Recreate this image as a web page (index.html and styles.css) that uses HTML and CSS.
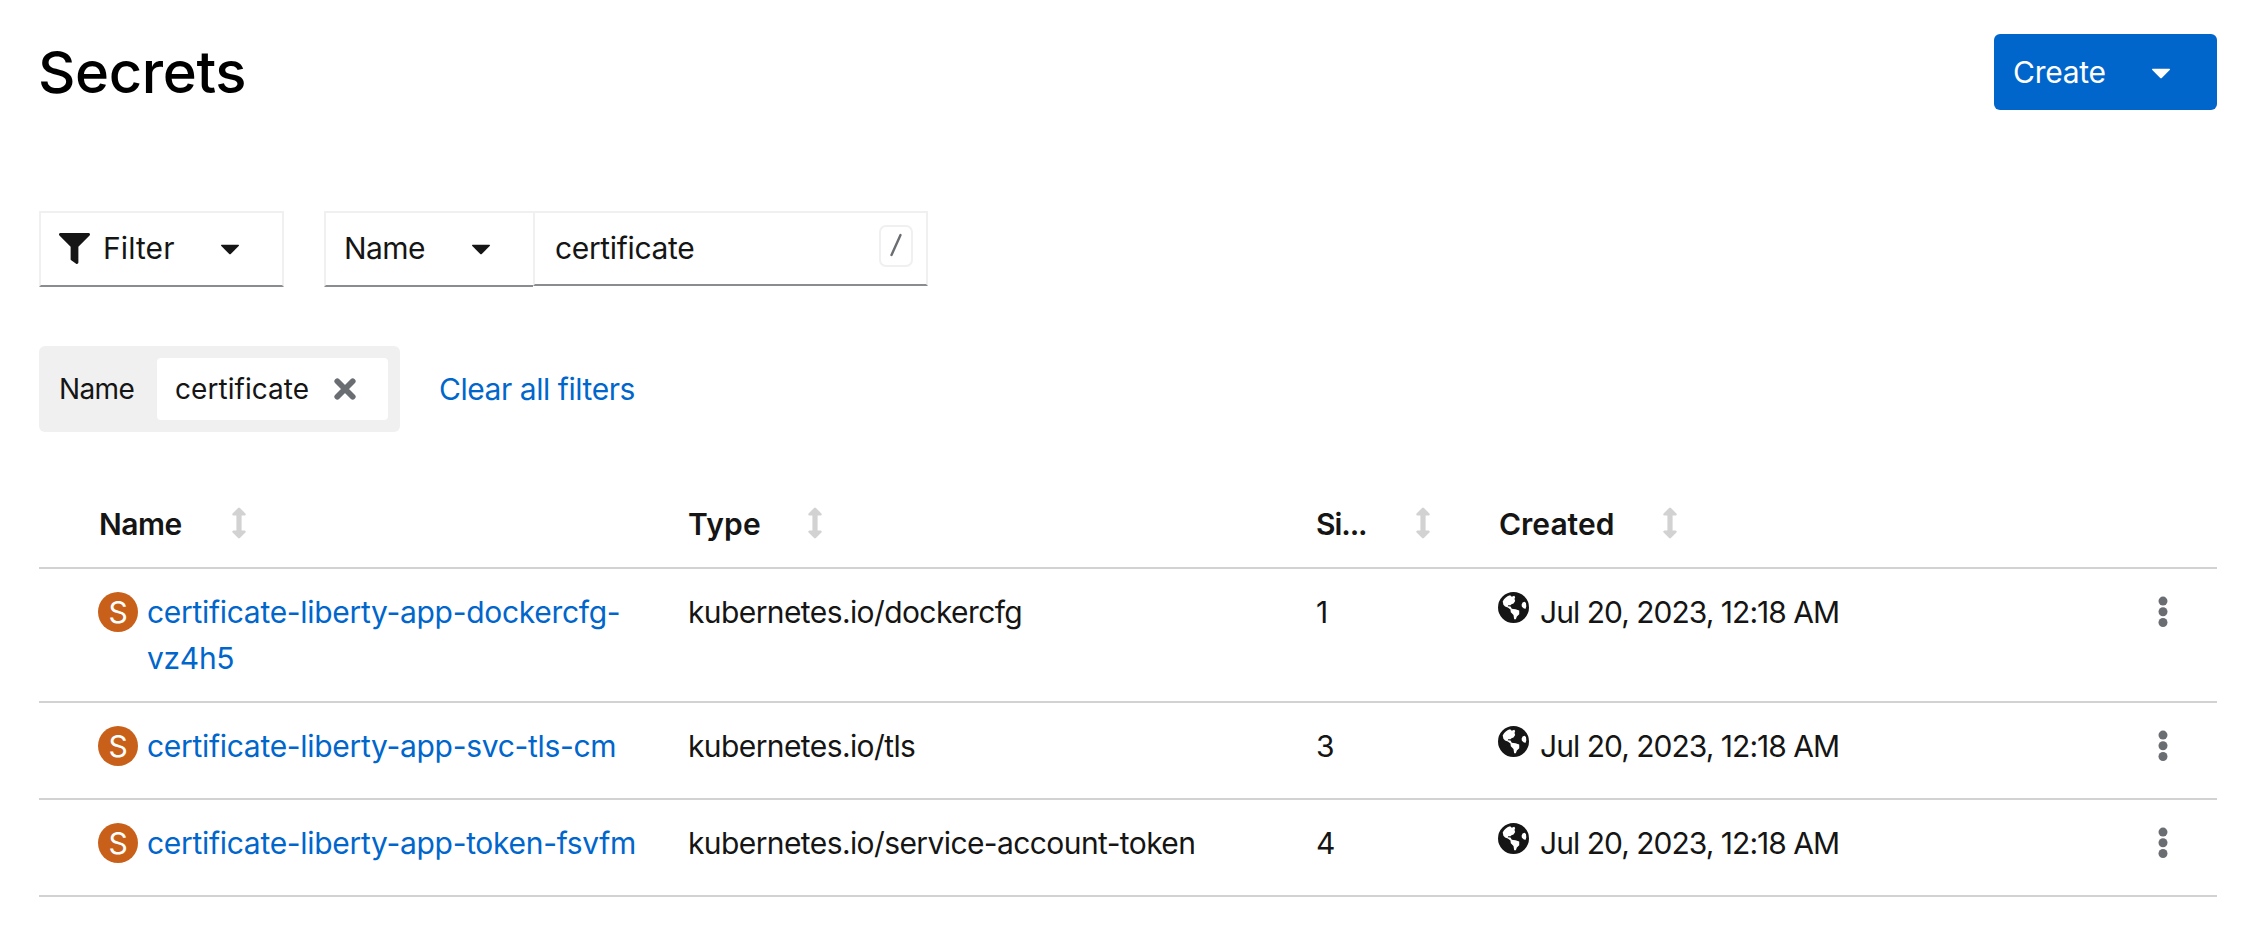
FILE: index.html
```html
<!DOCTYPE html>
<html lang="en">
<head>
<meta charset="utf-8">
<title>Secrets</title>
<link rel="stylesheet" href="styles.css">
</head>
<body>
<svg class="defs" aria-hidden="true">
  <symbol id="caret" viewBox="0 0 20 12"><path d="M1.8 .8H18.2Q19.8 .8 18.7 2L11 9.8Q10 10.8 9 9.8L1.3 2Q.2 .8 1.8 .8Z"/></symbol>
  <symbol id="filter" viewBox="0 0 512 512"><path d="M487.976 0H24.028C2.71 0-8.047 25.866 7.058 40.971L192 225.941V432c0 7.831 3.821 15.17 10.237 19.662l80 55.98C298.02 518.69 320 507.493 320 487.98V225.941l184.947-184.97C520.021 25.896 509.338 0 487.976 0z"/></symbol>
  <symbol id="sort" viewBox="0 0 14 32"><path d="M6.1 .9Q7 .1 7.9 .9L13.4 6.4Q14.4 8 12.6 8.4H9.6V23.6H12.6Q14.4 24 13.4 25.6L7.9 31.1Q7 31.9 6.1 31.1L.6 25.6Q-.4 24 1.4 23.6H4.4V8.4H1.4Q-.4 8 .6 6.4Z"/></symbol>
  <symbol id="globe" viewBox="0 0 92 92"><path fill-rule="evenodd" d="M46 0a46 46 0 1 0 0 92a46 46 0 1 0 0-92ZM14 28C18 19 27 12 36 10L41 14L48 11L51 15L49 21L51 27L46 34L40 36L37 39H30L29 42L37 43L41 50L52 51L63 55L63 66L56 73L53 81H48L46 68L38 60L37 52L29 46L21 43L16 38ZM79 29L83 33L84 42L82 50L77 49L71 44L70 38L73 31Z"/></symbol>
  <symbol id="kebab" viewBox="0 0 10 32"><circle cx="5" cy="5.1" r="4.5"/><circle cx="5" cy="15.8" r="4.5"/><circle cx="5" cy="26.5" r="4.5"/></symbol>
</svg>

<main class="page">
  <header class="page-header">
    <h1 class="title">Secrets</h1>
    <button class="create"><span class="create-label">Create</span><svg class="caret"><use href="#caret"/></svg></button>
  </header>

  <div class="toolbar">
    <button class="toggle toggle-filter"><svg class="filter-icon"><use href="#filter"/></svg><span class="filter-label">Filter</span><svg class="caret"><use href="#caret"/></svg></button>
    <div class="search">
      <button class="toggle toggle-name"><span class="name-label">Name</span><svg class="caret"><use href="#caret"/></svg></button>
      <div class="search-field"><span class="search-text">certificate</span><kbd class="shortcut"><svg viewBox="0 0 12 24"><path d="M1.5 22L10.5 2"/></svg></kbd></div>
    </div>
  </div>

  <div class="chips">
    <div class="chip-group">
      <span class="chip-category">Name</span>
      <div class="chip"><span class="chip-text">certificate</span><svg class="close" viewBox="0 0 22 22"><path d="M3.3 3.3L18.7 18.7M18.7 3.3L3.3 18.7"/></svg></div>
    </div>
    <a class="clear">Clear all filters</a>
  </div>

  <section class="table">
    <div class="row head">
      <div class="cell"><span class="th-name">Name</span><svg class="sort"><use href="#sort"/></svg></div>
      <div class="cell"><span class="th-type">Type</span><svg class="sort"><use href="#sort"/></svg></div>
      <div class="cell"><span class="th-size">Si...</span><svg class="sort"><use href="#sort"/></svg></div>
      <div class="cell"><span class="th-created">Created</span><svg class="sort"><use href="#sort"/></svg></div>
    </div>
    <div class="row">
      <div class="cell"><span class="badge">S</span><a class="link">certificate-liberty-app-dockercfg-<br>vz4h5</a></div>
      <div class="cell kind">kubernetes.io/dockercfg</div>
      <div class="cell">1</div>
      <div class="cell"><svg class="globe"><use href="#globe"/></svg><span class="date">Jul 20, 2023, 12:18 AM</span></div>
      <div class="cell"><svg class="kebab"><use href="#kebab"/></svg></div>
    </div>
    <div class="row">
      <div class="cell"><span class="badge">S</span><a class="link">certificate-liberty-app-svc-tls-cm</a></div>
      <div class="cell kind">kubernetes.io/tls</div>
      <div class="cell">3</div>
      <div class="cell"><svg class="globe"><use href="#globe"/></svg><span class="date">Jul 20, 2023, 12:18 AM</span></div>
      <div class="cell"><svg class="kebab"><use href="#kebab"/></svg></div>
    </div>
    <div class="row">
      <div class="cell"><span class="badge">S</span><a class="link">certificate-liberty-app-token-fsvfm</a></div>
      <div class="cell kind">kubernetes.io/service-account-token</div>
      <div class="cell">4</div>
      <div class="cell"><svg class="globe"><use href="#globe"/></svg><span class="date">Jul 20, 2023, 12:18 AM</span></div>
      <div class="cell"><svg class="kebab"><use href="#kebab"/></svg></div>
    </div>
  </section>
</main>
</body>
</html>
```
FILE: styles.css
```css
* { box-sizing: border-box; }

body {
  margin: 0;
  background: #fff;
  color: #151515;
  font: 400 30px/46px Inter, "Liberation Sans", sans-serif;
}

button {
  margin: 0;
  font: inherit;
  color: inherit;
  text-align: left;
}

svg { display: block; flex: none; fill: currentColor; }
.defs { position: absolute; width: 0; height: 0; }
.page { padding: 34px 43px 0 39px; }

.page-header { display: flex; justify-content: space-between; height: 76px; }
.title {
  margin: 0 0 0 -1px;
  color: #000;
  font-size: 58px;
  font-weight: 540;
  line-height: 76px;
  letter-spacing: -.4px;
}
.create {
  display: flex;
  align-items: center;
  width: 223px;
  padding: 0 0 0 19px;
  border: 0;
  border-radius: 6px;
  background: #06c;
  color: #fff;
}
.create-label { width: 138px; letter-spacing: -.25px; }
.caret { width: 20px; height: 12px; margin-top: 3px; }

.toolbar { display: flex; align-items: flex-start; gap: 40px; margin-top: 101px; }
.toggle {
  display: flex;
  align-items: center;
  height: 76px;
  border: 2px solid #f0f0f0;
  border-bottom-color: #8a8d90;
  background: #fff;
  padding: 0 0 2px;
}
.toggle-filter { width: 245px; padding-left: 18px; }
.filter-icon { width: 31px; height: 31px; }
.filter-label { width: 117px; margin-left: 13px; letter-spacing: .1px; }
.search { display: flex; align-items: flex-start; }
.toggle-name { width: 209px; border-right: 0; padding-left: 18px; }
.name-label { width: 127px; letter-spacing: -.6px; }
.search-field {
  display: flex;
  justify-content: space-between;
  width: 395px;
  height: 75px;
  padding: 12px 13px 0 20px;
  border: 2px solid #f0f0f0;
  border-bottom-color: #8a8d90;
}
.search-text { letter-spacing: -.35px; }
.shortcut {
  display: flex;
  align-items: center;
  justify-content: center;
  width: 34px;
  height: 42px;
  border: 2px solid #f0f0f0;
  border-radius: 7px;
}
.shortcut svg { width: 12px; height: 24px; margin-top: -2px; fill: none; stroke: #6a6e73; stroke-width: 2.4; stroke-linecap: round; }

.chips { display: flex; align-items: center; gap: 39px; margin-top: 59px; }
.chip-group {
  display: flex;
  align-items: center;
  width: 361px;
  height: 86px;
  padding-left: 20px;
  border-radius: 6px;
  background: #f0f0f0;
}
.chip-category { width: 98px; font-size: 28px; letter-spacing: -.6px; }
.chip {
  display: flex;
  align-items: center;
  width: 231px;
  height: 62px;
  padding-left: 18px;
  border-radius: 4px;
  background: #fff;
}
.chip-text { width: 159px; font-size: 28px; letter-spacing: .05px; }
.close { width: 22px; height: 22px; fill: none; stroke: #6a6e73; stroke-width: 5.8; stroke-linecap: round; }
.clear { color: #06c; letter-spacing: -.45px; }

.table { margin-top: 49px; }
.row {
  display: grid;
  grid-template-columns: 590px 628px 182px 619px 1fr;
  min-height: 97px;
  padding: 20px 0 20px 59px;
  border-bottom: 2px solid #d2d2d2;
}
.head { min-height: 88px; font-weight: 600; }
.cell { display: flex; align-items: flex-start; white-space: nowrap; }
.th-name { width: 134px; padding-left: 1px; letter-spacing: -.5px; }
.th-type { width: 120px; letter-spacing: .2px; }
.th-size { width: 100px; letter-spacing: -1.1px; }
.th-created { width: 165px; padding-left: 1px; letter-spacing: 0; }
.sort { width: 14px; height: 32px; margin-top: 6px; fill: #d2d2d2; }
.badge {
  width: 40px;
  height: 40px;
  margin: 3px 9px 0 0;
  border-radius: 50%;
  background: #c9601a;
  color: #fff;
  line-height: 40px;
  text-align: center;
}
.link { color: #06c; letter-spacing: -.3px; }
.kind { letter-spacing: -.6px; }
.globe { width: 31px; height: 31px; margin: 3px 11px 0 0; }
.date { letter-spacing: -.98px; }
.kebab { width: 10px; height: 32px; margin: 7px 0 0 41px; fill: #6a6e73; }
```
